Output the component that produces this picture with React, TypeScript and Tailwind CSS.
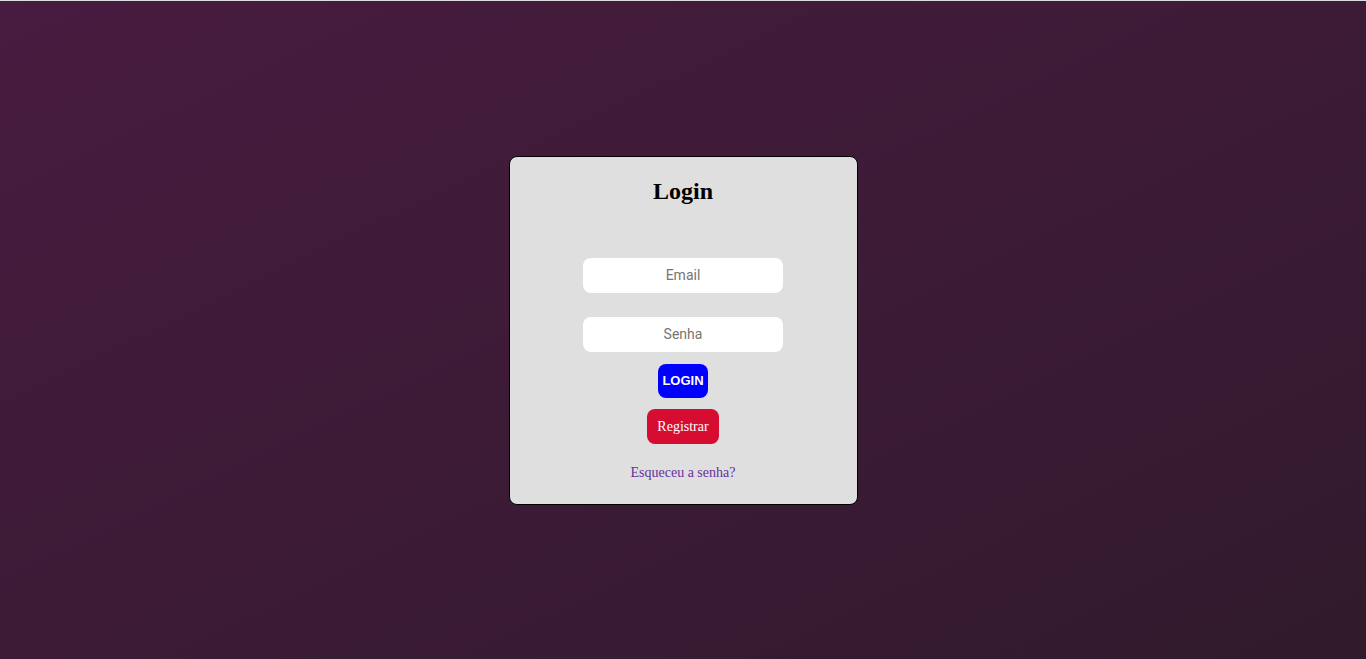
import React from "react";

const LoginCard: React.FC = () => {
    return (
        <div className="w-[349px] h-[349px] rounded-[8px] border border-black bg-[#dfdfdf] flex flex-col items-center pt-[20px]">
            <h2 className="font-['Liberation_Serif',serif] font-bold text-[24px] leading-[28px] text-black">Login</h2>
            <input
                type="email"
                placeholder="Email"
                className="mt-[53px] w-[200px] h-[35px] rounded-[8px] bg-white text-center font-['Roboto',sans-serif] text-[14px] placeholder:text-[#757575] outline-none"
            />
            <input
                type="password"
                placeholder="Senha"
                className="mt-[24px] w-[200px] h-[35px] rounded-[8px] bg-white text-center font-['Roboto',sans-serif] text-[14px] placeholder:text-[#757575] outline-none"
            />
            <button className="mt-[12px] w-[50px] h-[34px] rounded-[8px] bg-[#0000ff] text-white font-['Liberation_Sans',sans-serif] font-bold text-[13px]">
                LOGIN
            </button>
            <button className="mt-[11px] w-[72px] h-[35px] rounded-[8px] bg-[#d60c31] text-white font-['Liberation_Serif',serif] text-[14px]">
                Registrar
            </button>
            <a href="#" className="mt-[21px] font-['Liberation_Serif',serif] text-[14px] leading-[16px] text-[#6630a0]">
                Esqueceu a senha?
            </a>
        </div>
    );
};

export default function App() {
    return (
        <div className="h-screen w-full border-t border-[#dcdcdc] bg-linear-to-br from-[#481b40] to-[#311a2c] flex items-center justify-center">
            <LoginCard />
        </div>
    );
}
